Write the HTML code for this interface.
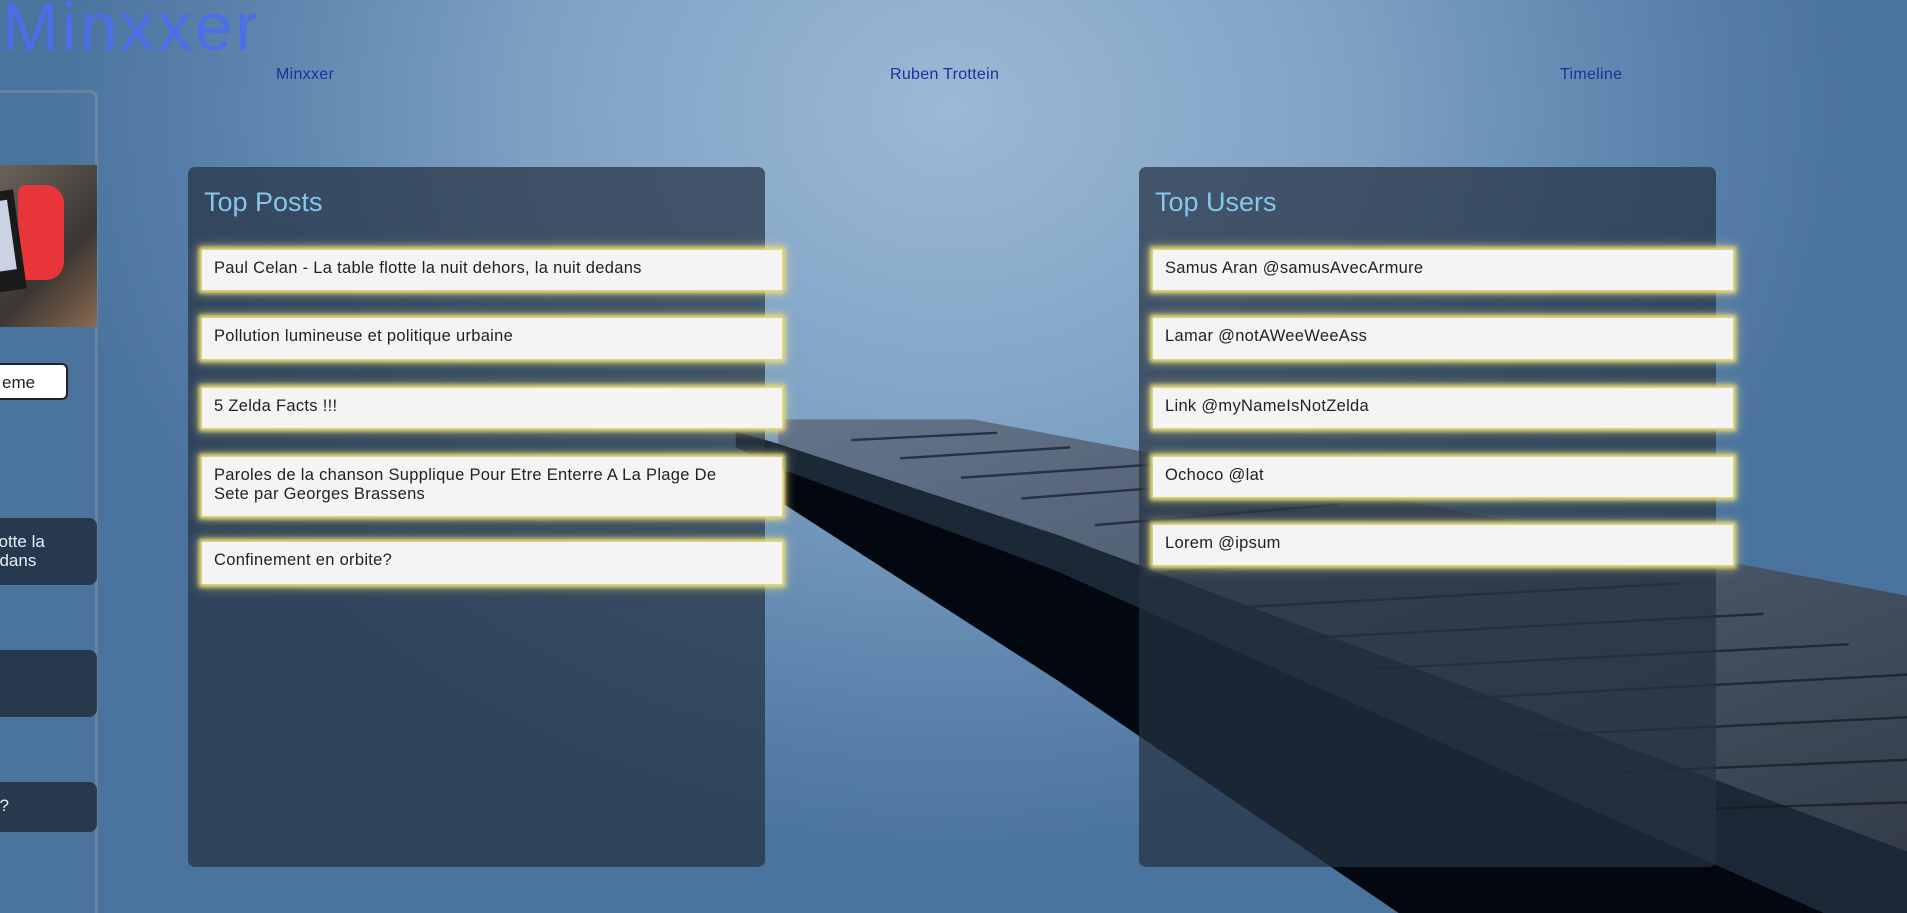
<!DOCTYPE html>
<html style="width:1907px;height:913px;overflow:hidden;background:#4a739e"><head><meta charset="utf-8">
<style>
*{margin:0;padding:0;box-sizing:border-box}
body{width:1907px;height:913px;overflow:hidden;position:relative;font-family:"Liberation Sans",sans-serif;
background:radial-gradient(ellipse 900px 750px at 950px 110px,#9cb9d6 0%,#7fa2c4 45%,#5a82ab 80%,#4a739e 100%);}
#bg{position:absolute;left:0;top:0;width:1907px;height:913px;display:block}
.title{position:absolute;left:2px;top:-12px;font-size:68px;color:#4a6fe8;letter-spacing:3px}
.nav{position:absolute;top:66px;font-size:16px;color:#1c2f9a;letter-spacing:.3px}
.side{position:absolute;left:-10px;top:90px;width:108px;height:840px;border:3px solid rgba(140,150,165,.45);border-radius:8px;background:rgba(80,120,160,.1)}
.simg{position:absolute;left:0;top:165px;width:97px;height:162px;background:linear-gradient(135deg,#6a625a,#3a3632 60%,#8a6a50);overflow:hidden}
.sbtn{position:absolute;left:-10px;top:363px;width:78px;height:37px;background:#fff;border:2px solid #222;border-radius:6px;font-size:17px;padding:8px 0 0 10px;color:#222}
.scard{position:absolute;left:-10px;width:107px;background:rgba(30,42,58,.8);border-radius:8px;color:#e8eef5;font-size:17px;line-height:19px}
.panel{position:absolute;top:167px;width:577px;height:700px;background:rgba(38,50,66,.72);border-radius:7px}
.panel h2{position:absolute;left:16px;top:20px;font-size:27px;color:#86c6ec;font-weight:normal}
.item{position:absolute;left:14px;width:580px;background:#f4f4f4;box-shadow:0 0 4px 3px #e8dc7a,0 0 10px 4px rgba(240,230,130,.5);font-size:16.5px;color:#222;padding:9px 12px;line-height:19px;letter-spacing:.3px}
</style></head><body>
<svg id="bg" viewBox="0 0 1568 751" preserveAspectRatio="none">
<defs><linearGradient id="deck" x1="0" y1="0" x2="1" y2="1"><stop offset="0" stop-color="#63748a"/><stop offset="1" stop-color="#333d4a"/></linearGradient></defs>
<polygon points="645,385 870,470 1500,751 1150,751 870,560 645,415" fill="#030810"/>
<polygon points="605,355 640,365 870,440 1568,700 1568,751 1500,751 870,470 640,385 605,368" fill="#1b2836"/>
<polygon points="640,345 800,345 1568,490 1568,700 870,440 640,365" fill="url(#deck)"/>
<g stroke="#141a22" stroke-width="2" opacity=".7">
<line x1="700" y1="362" x2="820" y2="356"/><line x1="740" y1="377" x2="880" y2="368"/><line x1="790" y1="393" x2="950" y2="382"/><line x1="840" y1="410" x2="1020" y2="396"/><line x1="900" y1="432" x2="1100" y2="415"/>
<line x1="960" y1="470" x2="1300" y2="452"/><line x1="1010" y1="500" x2="1380" y2="480"/><line x1="1070" y1="525" x2="1450" y2="505"/><line x1="1130" y1="550" x2="1520" y2="530"/><line x1="1190" y1="575" x2="1568" y2="555"/><line x1="1260" y1="605" x2="1568" y2="590"/><line x1="1330" y1="635" x2="1568" y2="625"/><line x1="1410" y1="665" x2="1568" y2="660"/>
</g>
</svg>
<div class="title">Minxxer</div>
<div class="nav" style="left:276px">Minxxer</div>
<div class="nav" style="left:890px">Ruben Trottein</div>
<div class="nav" style="left:1560px">Timeline</div>
<div class="side"></div>
<div class="simg"><div style="position:absolute;left:18px;top:20px;width:46px;height:95px;background:#e8353a;border-radius:8px 18px 18px 8px"></div><div style="position:absolute;left:-10px;top:26px;width:30px;height:100px;background:#1a1a1a;transform:rotate(-8deg)"></div><div style="position:absolute;left:-10px;top:36px;width:22px;height:70px;background:#c8d4e4;transform:rotate(-8deg)"></div></div>
<div class="sbtn">eme</div>
<div class="scard" style="top:518px;height:67px;padding:14px 0 0 0">flotte la<br>edans</div>
<div class="scard" style="top:650px;height:67px;padding:14px 0 0 0">t</div>
<div class="scard" style="top:782px;height:50px;padding:14px 0 0 0">e?</div>

<div class="panel" style="left:188px"><h2>Top Posts</h2>
<div class="item" style="top:83px;height:40px">Paul Celan - La table flotte la nuit dehors, la nuit dedans</div>
<div class="item" style="top:151px;height:41px">Pollution lumineuse et politique urbaine</div>
<div class="item" style="top:221px;height:40px">5 Zelda Facts !!!</div>
<div class="item" style="top:290px;height:59px">Paroles de la chanson Supplique Pour Etre Enterre A La Plage De<br>Sete par Georges Brassens</div>
<div class="item" style="top:375px;height:42px">Confinement en orbite?</div>
</div>
<div class="panel" style="left:1139px"><h2>Top Users</h2>
<div class="item" style="top:83px;height:40px">Samus Aran @samusAvecArmure</div>
<div class="item" style="top:151px;height:41px">Lamar @notAWeeWeeAss</div>
<div class="item" style="top:221px;height:40px">Link @myNameIsNotZelda</div>
<div class="item" style="top:290px;height:40px">Ochoco @lat</div>
<div class="item" style="top:358px;height:40px">Lorem @ipsum</div>
</div>
</body></html>
